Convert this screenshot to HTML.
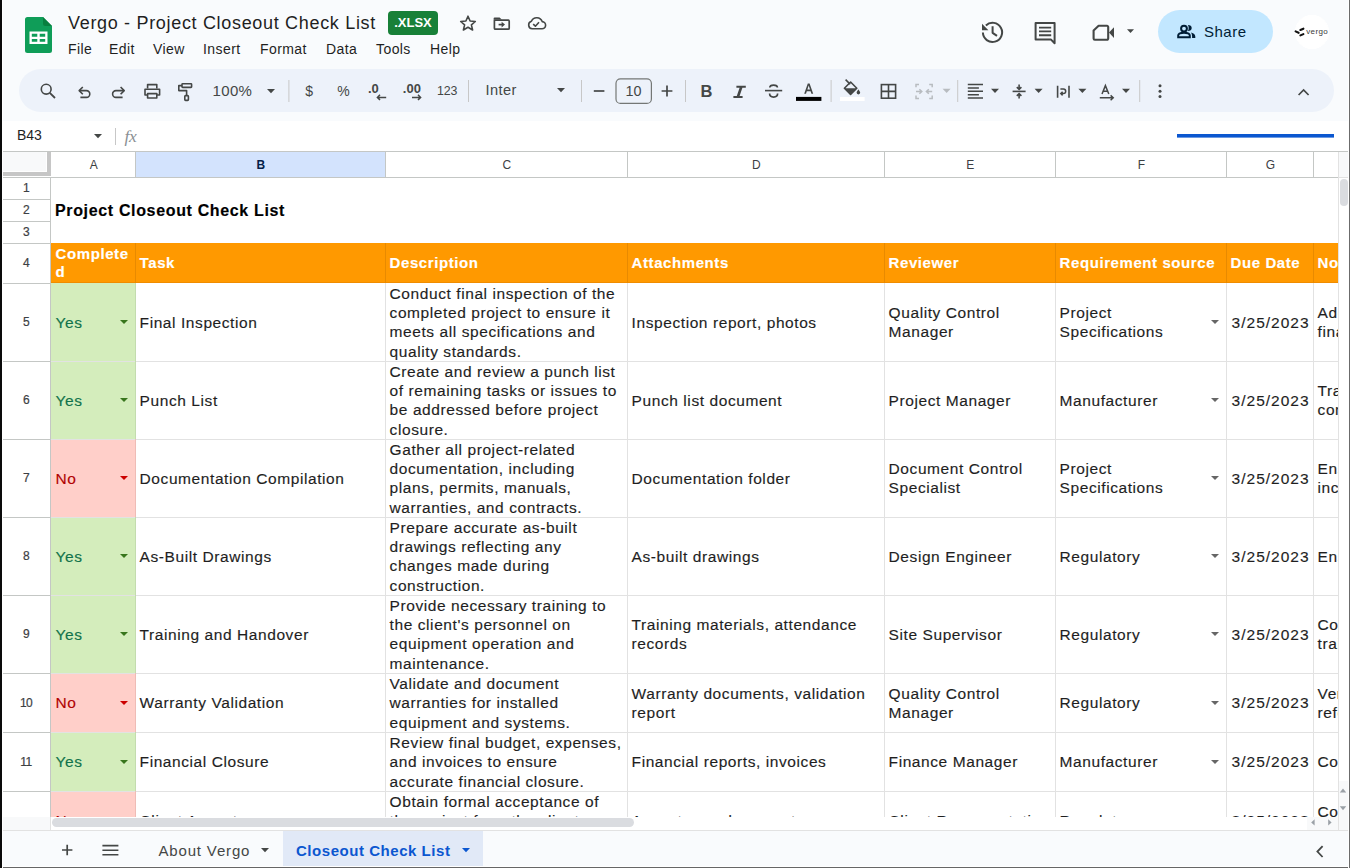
<!DOCTYPE html>
<html><head><meta charset="utf-8">
<style>
*{box-sizing:border-box;margin:0;padding:0}
html,body{width:1350px;height:868px;overflow:hidden;background:#f9fbfd;font-family:"Liberation Sans",sans-serif;position:relative}
.a{position:absolute}
svg{position:absolute;overflow:visible}
.t{white-space:nowrap;position:absolute}
#frame-l{left:0;top:0;width:3px;height:868px;background:#fff;border-left:2px solid #0a0a0a}
#frame-b{left:0;top:866px;width:1350px;height:2px;background:#fff;border-bottom:1px solid #666}
#frame-r{left:1348px;top:0;width:2px;height:868px;background:#fff;border-right:1px solid #6b6b6b}
.title{left:68px;top:12.5px;font-size:18px;letter-spacing:0.68px;color:#1f1f1f}
.menu{top:40.5px;font-size:14px;color:#1f1f1f;letter-spacing:0.42px}
.badge{left:388px;top:11px;width:50px;height:24px;background:#188038;border-radius:4px;color:#fff;font-size:13px;font-weight:bold;text-align:center;line-height:24px}
.share{left:1158px;top:10px;width:115px;height:43px;background:#c2e7ff;border-radius:22px}
.share .t{left:46px;top:13px;font-size:15px;color:#001d35;letter-spacing:0.5px}
.avatar{left:1295px;top:15px;width:34px;height:34px;border-radius:50%;background:#fff}
.tb{left:19px;top:69px;width:1315px;height:43px;background:#edf2fa;border-radius:22px}
.sep{position:absolute;width:1px;height:22px;background:#c7c7c7;top:80px}
.fbar{left:2px;top:121px;width:1346px;height:30px;background:#fff}
#g{left:2px;top:151px;width:1336px;height:666px;background:#fff;overflow:hidden}
#gi{position:absolute;left:-2px;top:-151px;width:1350px;height:868px}
#gi div{position:absolute}
.tx{white-space:nowrap;font-size:15.5px;letter-spacing:0.58px;color:#1f1f1f;line-height:19.4px;-webkit-text-stroke:0.15px currentColor}
.hd{font-weight:bold;color:#fff;letter-spacing:0.58px;font-size:15px;line-height:18.4px}
.gl{background:#e2e2e2}
.ch{font-size:12px;line-height:25px;text-align:center}
.rh{font-size:12px;line-height:16px;text-align:center;color:#3c4043;letter-spacing:-0.6px;-webkit-text-stroke:0.2px #3c4043}
.ar{width:0;height:0;border-left:4px solid transparent;border-right:4px solid transparent;border-top:4px solid #666}
</style></head>
<body>

<!-- ===== TOP BAR ===== -->
<svg style="left:25px;top:17px" width="27" height="36" viewBox="0 0 27 36">
 <path d="M2.5 0H18L27 9V33.5A2.5 2.5 0 0 1 24.5 36H2.5A2.5 2.5 0 0 1 0 33.5V2.5A2.5 2.5 0 0 1 2.5 0Z" fill="#0f9d58"/>
 <path d="M18 0L27 9H20.5A2.5 2.5 0 0 1 18 6.5Z" fill="#087f3f"/>
 <path d="M4.5 14.5H22.5V27H4.5Z" fill="#fff"/>
 <path d="M6.8 16.8H12.3V19.7H6.8ZM14.7 16.8H20.2V19.7H14.7ZM6.8 21.9H12.3V24.7H6.8ZM14.7 21.9H20.2V24.7H14.7Z" fill="#0f9d58"/>
</svg>
<div class="t title">Vergo - Project Closeout Check List</div>
<div class="a badge">.XLSX</div>

<div class="t menu" style="left:68px">File</div>
<div class="t menu" style="left:109px">Edit</div>
<div class="t menu" style="left:153px">View</div>
<div class="t menu" style="left:203px">Insert</div>
<div class="t menu" style="left:260px">Format</div>
<div class="t menu" style="left:326px">Data</div>
<div class="t menu" style="left:376px">Tools</div>
<div class="t menu" style="left:430px">Help</div>

<div class="a share"><div class="t">Share</div></div>
<div class="a avatar"></div>

<!-- ===== TOOLBAR ===== -->
<div class="a tb"></div>

<svg style="left:0;top:0" width="1350" height="868" viewBox="0 0 1350 868">
<g fill="none" stroke="#444746" stroke-width="1.7" stroke-linecap="butt" stroke-linejoin="round">
 <!-- star -->
 <path d="M468 16.2 L470.1 21 L475.3 21.5 L471.4 24.9 L472.6 30 L468 27.3 L463.4 30 L464.6 24.9 L460.7 21.5 L465.9 21 Z" stroke-width="1.6"/>
 <!-- folder move -->
 <path d="M494.4 20.2 V28.2 A1 1 0 0 0 495.4 29.2 H508.2 A1 1 0 0 0 509.2 28.2 V21.2 A1 1 0 0 0 508.2 20.2 Z" stroke-width="1.7"/>
 <path d="M493.6 19.6 V18.4 A1 1 0 0 1 494.6 17.4 H499.6 L501.8 19.6 Z" fill="#444746" stroke="none"/>
 <path d="M498.6 24.6 H502.6" stroke-width="1.7"/>
 <path d="M501.6 21.8 L505 24.6 L501.6 27.4 Z" fill="#444746" stroke="none"/>
 <!-- cloud done -->
 <path d="M532.2 28.8 H541.8 A3.6 3.6 0 0 0 542.2 21.6 A5.8 5.8 0 0 0 531.4 21.2 A3.9 3.9 0 0 0 532.2 28.8 Z" stroke-width="1.6"/>
 <path d="M533.2 24.2 L535.4 26.2 L539 22.2" stroke-width="1.6"/>
 <!-- history -->
 <path d="M982.9 32.6 A9.6 9.6 0 1 0 985.9 25.4" stroke-width="2"/>
 <path d="M992.6 26.2 V32.8 L997 35.8" stroke-width="2"/>
<!-- comment -->
 <path d="M1035.6 23 H1054.6 V43.2 L1050.8 39.4 H1035.6 Z" stroke-width="2"/>
 <path d="M1039 27.6 H1051.2 M1039 31.4 H1051.2 M1039 35.2 H1051.2" stroke-width="1.9"/>
 <!-- video -->
 <path d="M1093.6 30.4 L1098.6 25.8 H1107 A1.2 1.2 0 0 1 1108.2 27 V38.6 A1.2 1.2 0 0 1 1107 39.8 H1094.8 A1.2 1.2 0 0 1 1093.6 38.6 Z" stroke-width="2.1"/>
</g>
<g fill="#444746">
 <path d="M982 23.8 V30.2 H988.4 Z"/>
 <path d="M1109 32.6 L1114 27.2 V38 Z"/>
 <path d="M1127 29.3 H1134 L1130.5 33 Z"/>
</g>
<!-- share people icon -->
<g fill="none" stroke="#001d35" stroke-width="2">
 <circle cx="1184" cy="28.6" r="2.9"/>
 <path d="M1178.2 37.2 V35.6 C1178.2 33.8 1181 32.8 1184 32.8 C1187 32.8 1189.8 33.8 1189.8 35.6 V37.2 Z"/>
</g>
<g fill="#001d35">
 <path d="M1187.8 24.9 A3.9 3 0 0 1 1187.8 30.9 C1189 29.4 1189 26.4 1187.8 24.9 Z"/>
 <path d="M1191.1 32.4 C1193.8 33 1195.3 34.6 1195.3 36.4 V37.9 H1192.1 V36.4 C1192.1 35 1191.8 33.6 1191.1 32.4 Z"/>
</g>
<!-- avatar logo -->
<circle cx="1312" cy="32" r="17" fill="#fff"/>
<g stroke="#111" stroke-width="2.1" stroke-linecap="round" fill="none">
 <path d="M1295.6 31.4 L1298.6 32.8"/>
 <path d="M1300.4 30 L1303.4 28.7"/>
 <path d="M1300.4 35.4 L1303.4 34.1"/>
</g>
<text x="1306.2" y="34.4" font-family="Liberation Sans" font-size="8" fill="#3a3a3a" letter-spacing="0.4">vergo</text>
<!-- ===== toolbar ===== -->
<g fill="none" stroke="#444746" stroke-width="1.6" stroke-linejoin="round">
 <!-- search -->
 <circle cx="46.2" cy="89.2" r="4.9"/>
 <path d="M49.8 92.8 L55 98" stroke-width="1.8"/>
 <!-- undo -->
 <path d="M79.8 90.6 H86.4 A3.4 3.4 0 0 1 86.4 97.4 H80.4"/>
 <path d="M82.8 87 L79.2 90.6 L82.8 94.2"/>
 <!-- redo -->
 <path d="M123.8 90.6 H116 A3.4 3.4 0 0 0 116 97.4 H122.6"/>
 <path d="M120.6 87 L124.2 90.6 L120.6 94.2"/>
 <!-- print -->
 <path d="M147.6 88.4 V84.6 H156.8 V88.4"/>
 <path d="M147.6 95 H145 V89.2 H159.6 V95 H157"/>
 <path d="M147.6 93.6 H156.8 V98 H147.6 Z"/>
 <!-- paint format -->
 <rect x="182" y="83.8" width="9.6" height="3.6" rx="0.6"/>
 <path d="M182 85.6 H178.8 V90.6 H186.6 V95.4"/>
 <rect x="184.8" y="95.6" width="3.6" height="4.8" rx="0.8"/>
</g>
<g fill="#444746">
 <path d="M267 89 H275 L271 93.2 Z"/>
 <path d="M557 88 H565 L561 92.2 Z"/>
 <path d="M991 88.8 H999 L995 93 Z"/>
 <path d="M1034.6 88.8 H1042.6 L1038.6 93 Z"/>
 <path d="M1078.4 88.8 H1086.4 L1082.4 93 Z"/>
 <path d="M1122 88.8 H1130 L1126 93 Z"/>
 <path d="M942.6 88.8 H950.6 L946.6 93 Z" fill="#b8bcc0"/>
 <path d="M1127 29.3 H1134 L1130.5 33 Z" fill="none"/>
</g>
<g fill="#c7c7c7">
 <rect x="288.4" y="80" width="1" height="22"/>
 <rect x="468" y="80" width="1" height="22"/>
 <rect x="581" y="80" width="1" height="22"/>
 <rect x="685" y="80" width="1" height="22"/>
 <rect x="830.6" y="80" width="1" height="22"/>
 <rect x="957.2" y="80" width="1" height="22"/>
 <rect x="1139.2" y="80" width="1" height="22"/>
</g>
<g font-family="Liberation Sans" fill="#444746">
 <text x="212.6" y="96" font-size="15" letter-spacing="0.3">100%</text>
 <text x="305.2" y="96" font-size="14">$</text>
 <text x="337.2" y="96" font-size="14">%</text>
 <text x="368" y="93" font-size="13" font-weight="bold">.0</text>
 <text x="402.8" y="93" font-size="13" font-weight="bold">.00</text>
 <text x="437" y="94.6" font-size="12.4" letter-spacing="-0.2">123</text>
 <text x="485.6" y="95.4" font-size="14.6" letter-spacing="0.4">Inter</text>
 <text x="633.6" y="95.8" font-size="14.4" text-anchor="middle">10</text>
</g>
<g fill="none" stroke="#444746" stroke-width="1.5">
 <path d="M377.2 97.4 H386.2 M380 94.8 L377.4 97.4 L380 100"/>
 <path d="M412 97.4 H420.6 M418 94.8 L420.6 97.4 L418 100"/>
 <rect x="616" y="78.8" width="35.4" height="24.6" rx="4.5" stroke="#747775" stroke-width="1.2"/>
 <path d="M593.8 91 H604.4" stroke-width="1.7"/>
 <path d="M661.6 91 H672.4 M667 85.6 V96.4" stroke-width="1.7"/>
 <!-- strike -->
 <path d="M765 90.6 H782.2" stroke-width="1.6"/>
 <path d="M777.4 87.6 C777.4 84.2 769.8 84.2 769.8 87.6" stroke-width="1.7"/>
 <path d="M769.6 93.6 C769.6 98.2 777.6 98.2 777.6 93.6" stroke-width="1.7"/>
 <!-- borders -->
 <rect x="881.4" y="84.6" width="14.2" height="13.6" stroke-width="1.6"/>
 <path d="M888.5 84.6 V98.2 M881.4 91.4 H895.6" stroke-width="1.6"/>
 <!-- merge -->
 <g stroke="#b8bcc0" stroke-width="1.5">
  <path d="M916 87.2 V84.6 H919 M916 95.6 V98.4 H919 M932.2 87.2 V84.6 H929.2 M932.2 95.6 V98.4 H929.2"/>
  <path d="M916 91.5 H921.6 M919.4 89.2 L921.8 91.5 L919.4 93.8 M932.2 91.5 H926.6 M928.8 89.2 L926.4 91.5 L928.8 93.8"/>
 </g>
 <!-- align left -->
 <path d="M967.8 84.6 H983 M967.8 88 H978.9 M967.8 91.3 H983 M967.8 94.8 H978.9 M967.8 98 H983" stroke-width="1.5"/>
 <!-- vertical align -->
 <path d="M1012.6 91.4 H1025.6" stroke-width="1.6"/>
 <path d="M1019.1 84.6 V89.4 M1016.8 87.2 L1019.1 89.4 L1021.4 87.2 M1019.1 98.6 V93.6 M1016.8 95.8 L1019.1 93.6 L1021.4 95.8" stroke-width="1.6"/>
 <!-- wrap -->
 <path d="M1057.6 85.8 V97.8 M1069 85.8 V97.8" stroke-width="1.6"/>
 <path d="M1060.4 89 H1063.4 A2.3 2.3 0 0 1 1063.4 93.6 H1061 M1062.6 91.8 L1060.8 93.6 L1062.6 95.4" stroke-width="1.5"/>
 <!-- text rotation -->
 <path d="M1099.8 97.8 H1113 M1110.6 95.4 L1113.2 97.8 L1110.6 100.2" stroke-width="1.5"/>
 <path d="M1102 94 L1105.4 85.6 L1108.8 94 M1103.2 91.2 H1107.6" stroke-width="1.5"/>
 <!-- caret up -->
 <path d="M1298.6 95 L1303.6 90 L1308.6 95" stroke-width="1.7"/>
</g>
<g fill="#444746">
 <!-- bold B -->
 <text x="700.6" y="97.2" font-family="Liberation Sans" font-size="16.5" font-weight="bold">B</text>
 <!-- italic I -->
 <path d="M736.4 85.8 H745.8 V87.8 H742.4 L739.6 96 H742.6 V98 H733.4 V96 H736.8 L739.6 87.8 H736.4 Z"/>
 <!-- text color A -->
 <path d="M804.2 93.8 L807.8 83.4 H809.6 L813.2 93.8 H811.4 L810.6 91.2 H806.8 L806 93.8 Z M807.4 89.6 H810 L808.7 85.6 Z"/>
 <rect x="796" y="96.9" width="25.4" height="4" fill="#000"/>
 <!-- fill bucket -->
 <path d="M844.4 88.2 L850.6 82 L856.8 88.2 L850.6 94.4 Z" fill="none" stroke="#444746" stroke-width="1.6" stroke-linejoin="round"/>
 <path d="M844.4 88.2 H856.8 L850.6 94.4 Z"/>
 <path d="M845.6 79.6 L850.2 84.2" stroke="#444746" stroke-width="1.6"/>
 <path d="M858.4 89.4 C858.4 89.4 860.2 91.6 860.2 92.6 A1.8 1.8 0 0 1 856.6 92.6 C856.6 91.6 858.4 89.4 858.4 89.4 Z"/>
 <rect x="840" y="97" width="24.6" height="4" fill="#fff"/>
 <!-- more vert -->
 <circle cx="1160" cy="85.8" r="1.5"/><circle cx="1160" cy="91.2" r="1.5"/><circle cx="1160" cy="96.6" r="1.5"/>
</g>
</svg>

<!-- ===== FORMULA BAR ===== -->
<div class="a fbar"></div>
<div class="t" style="left:17px;top:127.4px;font-size:14px;color:#1f1f1f;letter-spacing:-0.1px">B43</div>
<svg style="left:0;top:0" width="1350" height="160">
 <path d="M94 134 H102 L98 138.2 Z" fill="#444746"/>
 <rect x="115" y="128" width="1" height="17" fill="#c7c7c7"/>
 <text x="124.6" y="142" font-family="Liberation Serif" font-style="italic" font-size="17.5" fill="#8a8f94" letter-spacing="-0.5">fx</text>
 <rect x="1177" y="134" width="157" height="3.6" fill="#0b57d0"/>
</svg>

<!-- ===== GRID ===== -->
<div id="g" class="a"><div id="gi">
<div class="bg" style="left:51px;top:243px;width:1287px;height:40px;background:#ff9900"></div>
<div class="bg" style="left:51px;top:283px;width:84px;height:78px;background:#d4edbc"></div>
<div class="bg" style="left:51px;top:361px;width:84px;height:78px;background:#d4edbc"></div>
<div class="bg" style="left:51px;top:439px;width:84px;height:78px;background:#ffcfc9"></div>
<div class="bg" style="left:51px;top:517px;width:84px;height:78px;background:#d4edbc"></div>
<div class="bg" style="left:51px;top:595px;width:84px;height:78px;background:#d4edbc"></div>
<div class="bg" style="left:51px;top:673px;width:84px;height:59px;background:#ffcfc9"></div>
<div class="bg" style="left:51px;top:732px;width:84px;height:59px;background:#d4edbc"></div>
<div class="bg" style="left:51px;top:791px;width:84px;height:59px;background:#ffcfc9"></div>
<div class="gl" style="left:51px;top:361px;width:1287px;height:1px"></div>
<div class="gl" style="left:51px;top:439px;width:1287px;height:1px"></div>
<div class="gl" style="left:51px;top:517px;width:1287px;height:1px"></div>
<div class="gl" style="left:51px;top:595px;width:1287px;height:1px"></div>
<div class="gl" style="left:51px;top:673px;width:1287px;height:1px"></div>
<div class="gl" style="left:51px;top:732px;width:1287px;height:1px"></div>
<div class="gl" style="left:51px;top:791px;width:1287px;height:1px"></div>
<div class="bg" style="left:51px;top:282px;width:1287px;height:1px;background:#f08c00"></div>
<div class="gl" style="left:135px;top:283px;width:1px;height:540px"></div>
<div class="gl" style="left:385px;top:283px;width:1px;height:540px"></div>
<div class="gl" style="left:627px;top:283px;width:1px;height:540px"></div>
<div class="gl" style="left:884px;top:283px;width:1px;height:540px"></div>
<div class="gl" style="left:1055px;top:283px;width:1px;height:540px"></div>
<div class="gl" style="left:1226px;top:283px;width:1px;height:540px"></div>
<div class="gl" style="left:1313px;top:283px;width:1px;height:540px"></div>
<div class="bg" style="left:135px;top:243px;width:1px;height:40px;background:#e88a00"></div>
<div class="bg" style="left:385px;top:243px;width:1px;height:40px;background:#e88a00"></div>
<div class="bg" style="left:627px;top:243px;width:1px;height:40px;background:#e88a00"></div>
<div class="bg" style="left:884px;top:243px;width:1px;height:40px;background:#e88a00"></div>
<div class="bg" style="left:1055px;top:243px;width:1px;height:40px;background:#e88a00"></div>
<div class="bg" style="left:1226px;top:243px;width:1px;height:40px;background:#e88a00"></div>
<div class="bg" style="left:1313px;top:243px;width:1px;height:40px;background:#e88a00"></div>
<div class="bg" style="left:135px;top:283px;width:1px;height:78px;background:#c3dcae"></div>
<div class="bg" style="left:135px;top:361px;width:1px;height:78px;background:#c3dcae"></div>
<div class="bg" style="left:135px;top:439px;width:1px;height:78px;background:#efbcb6"></div>
<div class="bg" style="left:135px;top:517px;width:1px;height:78px;background:#c3dcae"></div>
<div class="bg" style="left:135px;top:595px;width:1px;height:78px;background:#c3dcae"></div>
<div class="bg" style="left:135px;top:673px;width:1px;height:59px;background:#efbcb6"></div>
<div class="bg" style="left:135px;top:732px;width:1px;height:59px;background:#c3dcae"></div>
<div class="bg" style="left:135px;top:791px;width:1px;height:59px;background:#efbcb6"></div>
<div class="tx" style="left:55px;top:201px;font-size:16px;font-weight:bold;letter-spacing:0.65px;color:#000">Project Closeout Check List</div>
<div class="tx hd" style="left:55.6px;top:244.6px">Complete</div>
<div class="tx hd" style="left:55.6px;top:263.0px">d</div>
<div class="tx hd" style="left:139.6px;top:253.8px">Task</div>
<div class="tx hd" style="left:389.6px;top:253.8px">Description</div>
<div class="tx hd" style="left:631.6px;top:253.8px">Attachments</div>
<div class="tx hd" style="left:888.6px;top:253.8px">Reviewer</div>
<div class="tx hd" style="left:1059.6px;top:253.8px">Requirement source</div>
<div class="tx hd" style="left:1230.6px;top:253.8px">Due Date</div>
<div class="tx hd" style="left:1317.6px;top:253.8px">Notes</div>
<div class="tx" style="left:55.6px;top:312.7px;color:#11734b">Yes</div>
<div class="ar" style="left:120px;top:320.0px;border-top-color:#38761d"></div>
<div class="tx" style="left:139.6px;top:312.7px">Final Inspection</div>
<div class="tx" style="left:389.6px;top:283.6px">Conduct final inspection of the</div>
<div class="tx" style="left:389.6px;top:303.0px">completed project to ensure it</div>
<div class="tx" style="left:389.6px;top:322.4px">meets all specifications and</div>
<div class="tx" style="left:389.6px;top:341.8px">quality standards.</div>
<div class="tx" style="left:631.6px;top:312.7px">Inspection report, photos</div>
<div class="tx" style="left:888.6px;top:303.0px">Quality Control</div>
<div class="tx" style="left:888.6px;top:322.4px">Manager</div>
<div class="tx" style="left:1059.6px;top:303.0px">Project</div>
<div class="tx" style="left:1059.6px;top:322.4px">Specifications</div>
<div class="ar" style="left:1211px;top:320.0px;border-top-color:#666"></div>
<div class="tx" style="left:1231.6px;top:312.7px;letter-spacing:1.0px">3/25/2023</div>
<div class="tx" style="left:1317.6px;top:303.0px">Add</div>
<div class="tx" style="left:1317.6px;top:322.4px">fina</div>
<div class="tx" style="left:55.6px;top:390.7px;color:#11734b">Yes</div>
<div class="ar" style="left:120px;top:398.0px;border-top-color:#38761d"></div>
<div class="tx" style="left:139.6px;top:390.7px">Punch List</div>
<div class="tx" style="left:389.6px;top:361.6px">Create and review a punch list</div>
<div class="tx" style="left:389.6px;top:381.0px">of remaining tasks or issues to</div>
<div class="tx" style="left:389.6px;top:400.4px">be addressed before project</div>
<div class="tx" style="left:389.6px;top:419.8px">closure.</div>
<div class="tx" style="left:631.6px;top:390.7px">Punch list document</div>
<div class="tx" style="left:888.6px;top:390.7px">Project Manager</div>
<div class="tx" style="left:1059.6px;top:390.7px">Manufacturer</div>
<div class="ar" style="left:1211px;top:398.0px;border-top-color:#666"></div>
<div class="tx" style="left:1231.6px;top:390.7px;letter-spacing:1.0px">3/25/2023</div>
<div class="tx" style="left:1317.6px;top:381.0px">Trac</div>
<div class="tx" style="left:1317.6px;top:400.4px">com</div>
<div class="tx" style="left:55.6px;top:468.7px;color:#b10202">No</div>
<div class="ar" style="left:120px;top:476.0px;border-top-color:#cc0000"></div>
<div class="tx" style="left:139.6px;top:468.7px">Documentation Compilation</div>
<div class="tx" style="left:389.6px;top:439.6px">Gather all project-related</div>
<div class="tx" style="left:389.6px;top:459.0px">documentation, including</div>
<div class="tx" style="left:389.6px;top:478.4px">plans, permits, manuals,</div>
<div class="tx" style="left:389.6px;top:497.8px">warranties, and contracts.</div>
<div class="tx" style="left:631.6px;top:468.7px">Documentation folder</div>
<div class="tx" style="left:888.6px;top:459.0px">Document Control</div>
<div class="tx" style="left:888.6px;top:478.4px">Specialist</div>
<div class="tx" style="left:1059.6px;top:459.0px">Project</div>
<div class="tx" style="left:1059.6px;top:478.4px">Specifications</div>
<div class="ar" style="left:1211px;top:476.0px;border-top-color:#666"></div>
<div class="tx" style="left:1231.6px;top:468.7px;letter-spacing:1.0px">3/25/2023</div>
<div class="tx" style="left:1317.6px;top:459.0px">Ensu</div>
<div class="tx" style="left:1317.6px;top:478.4px">inclu</div>
<div class="tx" style="left:55.6px;top:546.7px;color:#11734b">Yes</div>
<div class="ar" style="left:120px;top:554.0px;border-top-color:#38761d"></div>
<div class="tx" style="left:139.6px;top:546.7px">As-Built Drawings</div>
<div class="tx" style="left:389.6px;top:517.6px">Prepare accurate as-built</div>
<div class="tx" style="left:389.6px;top:537.0px">drawings reflecting any</div>
<div class="tx" style="left:389.6px;top:556.4px">changes made during</div>
<div class="tx" style="left:389.6px;top:575.8px">construction.</div>
<div class="tx" style="left:631.6px;top:546.7px">As-built drawings</div>
<div class="tx" style="left:888.6px;top:546.7px">Design Engineer</div>
<div class="tx" style="left:1059.6px;top:546.7px">Regulatory</div>
<div class="ar" style="left:1211px;top:554.0px;border-top-color:#666"></div>
<div class="tx" style="left:1231.6px;top:546.7px;letter-spacing:1.0px">3/25/2023</div>
<div class="tx" style="left:1317.6px;top:546.7px">Ensu</div>
<div class="tx" style="left:55.6px;top:624.7px;color:#11734b">Yes</div>
<div class="ar" style="left:120px;top:632.0px;border-top-color:#38761d"></div>
<div class="tx" style="left:139.6px;top:624.7px">Training and Handover</div>
<div class="tx" style="left:389.6px;top:595.6px">Provide necessary training to</div>
<div class="tx" style="left:389.6px;top:615.0px">the client's personnel on</div>
<div class="tx" style="left:389.6px;top:634.4px">equipment operation and</div>
<div class="tx" style="left:389.6px;top:653.8px">maintenance.</div>
<div class="tx" style="left:631.6px;top:615.0px">Training materials, attendance</div>
<div class="tx" style="left:631.6px;top:634.4px">records</div>
<div class="tx" style="left:888.6px;top:624.7px">Site Supervisor</div>
<div class="tx" style="left:1059.6px;top:624.7px">Regulatory</div>
<div class="ar" style="left:1211px;top:632.0px;border-top-color:#666"></div>
<div class="tx" style="left:1231.6px;top:624.7px;letter-spacing:1.0px">3/25/2023</div>
<div class="tx" style="left:1317.6px;top:615.0px">Con</div>
<div class="tx" style="left:1317.6px;top:634.4px">trai</div>
<div class="tx" style="left:55.6px;top:693.2px;color:#b10202">No</div>
<div class="ar" style="left:120px;top:700.5px;border-top-color:#cc0000"></div>
<div class="tx" style="left:139.6px;top:693.2px">Warranty Validation</div>
<div class="tx" style="left:389.6px;top:673.8px">Validate and document</div>
<div class="tx" style="left:389.6px;top:693.2px">warranties for installed</div>
<div class="tx" style="left:389.6px;top:712.6px">equipment and systems.</div>
<div class="tx" style="left:631.6px;top:683.5px">Warranty documents, validation</div>
<div class="tx" style="left:631.6px;top:702.9px">report</div>
<div class="tx" style="left:888.6px;top:683.5px">Quality Control</div>
<div class="tx" style="left:888.6px;top:702.9px">Manager</div>
<div class="tx" style="left:1059.6px;top:693.2px">Regulatory</div>
<div class="ar" style="left:1211px;top:700.5px;border-top-color:#666"></div>
<div class="tx" style="left:1231.6px;top:693.2px;letter-spacing:1.0px">3/25/2023</div>
<div class="tx" style="left:1317.6px;top:683.5px">Veri</div>
<div class="tx" style="left:1317.6px;top:702.9px">refe</div>
<div class="tx" style="left:55.6px;top:752.2px;color:#11734b">Yes</div>
<div class="ar" style="left:120px;top:759.5px;border-top-color:#38761d"></div>
<div class="tx" style="left:139.6px;top:752.2px">Financial Closure</div>
<div class="tx" style="left:389.6px;top:732.8px">Review final budget, expenses,</div>
<div class="tx" style="left:389.6px;top:752.2px">and invoices to ensure</div>
<div class="tx" style="left:389.6px;top:771.6px">accurate financial closure.</div>
<div class="tx" style="left:631.6px;top:752.2px">Financial reports, invoices</div>
<div class="tx" style="left:888.6px;top:752.2px">Finance Manager</div>
<div class="tx" style="left:1059.6px;top:752.2px">Manufacturer</div>
<div class="ar" style="left:1211px;top:759.5px;border-top-color:#666"></div>
<div class="tx" style="left:1231.6px;top:752.2px;letter-spacing:1.0px">3/25/2023</div>
<div class="tx" style="left:1317.6px;top:752.2px">Con</div>
<div class="tx" style="left:55.6px;top:811.2px;color:#b10202">No</div>
<div class="ar" style="left:120px;top:818.5px;border-top-color:#cc0000"></div>
<div class="tx" style="left:139.6px;top:811.2px">Client Acceptance</div>
<div class="tx" style="left:389.6px;top:791.8px">Obtain formal acceptance of</div>
<div class="tx" style="left:389.6px;top:811.2px">the project from the client</div>
<div class="tx" style="left:389.6px;top:830.6px">upon completion.</div>
<div class="tx" style="left:631.6px;top:811.2px">Acceptance document</div>
<div class="tx" style="left:888.6px;top:811.2px">Client Representative</div>
<div class="tx" style="left:1059.6px;top:811.2px">Regulatory</div>
<div class="ar" style="left:1211px;top:818.5px;border-top-color:#666"></div>
<div class="tx" style="left:1231.6px;top:811.2px;letter-spacing:1.0px">3/25/2023</div>
<div class="tx" style="left:1317.6px;top:801.5px">Con</div>
<div class="tx" style="left:1317.6px;top:820.9px">sign</div>
<div class="bg" style="left:2px;top:151px;width:1346px;height:1px;background:#c4c7c5"></div>
<div class="bg" style="left:3px;top:152px;width:43px;height:19px;background:#f8f9fa"></div>
<div class="bg" style="left:2px;top:172px;width:49px;height:4px;background:#c6c6c6"></div>
<div class="bg" style="left:47px;top:152px;width:4px;height:24px;background:#c6c6c6"></div>
<div class="bg" style="left:51px;top:152px;width:1287px;height:25px;background:#fff"></div>
<div class="bg" style="left:135px;top:152px;width:250px;height:25px;background:#d3e3fd"></div>
<div class="bg" style="left:2px;top:177px;width:1336px;height:1px;background:#c4c7c5"></div>
<div class="ch" style="left:51.8px;top:153px;width:84px;color:#3c4043">A</div>
<div class="bg" style="left:135px;top:152px;width:1px;height:25px;background:#c4c7c5"></div>
<div class="ch" style="left:135.8px;top:153px;width:250px;color:#041e49;font-weight:bold">B</div>
<div class="bg" style="left:385px;top:152px;width:1px;height:25px;background:#c4c7c5"></div>
<div class="ch" style="left:385.8px;top:153px;width:242px;color:#3c4043">C</div>
<div class="bg" style="left:627px;top:152px;width:1px;height:25px;background:#c4c7c5"></div>
<div class="ch" style="left:627.8px;top:153px;width:257px;color:#3c4043">D</div>
<div class="bg" style="left:884px;top:152px;width:1px;height:25px;background:#c4c7c5"></div>
<div class="ch" style="left:884.8px;top:153px;width:171px;color:#3c4043">E</div>
<div class="bg" style="left:1055px;top:152px;width:1px;height:25px;background:#c4c7c5"></div>
<div class="ch" style="left:1055.8px;top:153px;width:171px;color:#3c4043">F</div>
<div class="bg" style="left:1226px;top:152px;width:1px;height:25px;background:#c4c7c5"></div>
<div class="ch" style="left:1226.8px;top:153px;width:87px;color:#3c4043">G</div>
<div class="bg" style="left:1313px;top:152px;width:1px;height:25px;background:#c4c7c5"></div>
<div class="ch" style="left:1313.8px;top:153px;width:187px;color:#3c4043">H</div>
<div class="bg" style="left:2px;top:178px;width:48px;height:640px;background:#fff"></div>
<div class="bg" style="left:50px;top:178px;width:1px;height:640px;background:#c4c7c5"></div>
<div class="bg" style="left:2px;top:199px;width:48px;height:1px;background:#c4c7c5"></div>
<div class="rh" style="left:2px;top:180.0px;width:48px">1</div>
<div class="bg" style="left:2px;top:221px;width:48px;height:1px;background:#c4c7c5"></div>
<div class="rh" style="left:2px;top:202.0px;width:48px">2</div>
<div class="bg" style="left:2px;top:243px;width:48px;height:1px;background:#c4c7c5"></div>
<div class="rh" style="left:2px;top:224.0px;width:48px">3</div>
<div class="bg" style="left:2px;top:283px;width:48px;height:1px;background:#c4c7c5"></div>
<div class="rh" style="left:2px;top:255.0px;width:48px">4</div>
<div class="bg" style="left:2px;top:361px;width:48px;height:1px;background:#c4c7c5"></div>
<div class="rh" style="left:2px;top:314.0px;width:48px">5</div>
<div class="bg" style="left:2px;top:439px;width:48px;height:1px;background:#c4c7c5"></div>
<div class="rh" style="left:2px;top:392.0px;width:48px">6</div>
<div class="bg" style="left:2px;top:517px;width:48px;height:1px;background:#c4c7c5"></div>
<div class="rh" style="left:2px;top:470.0px;width:48px">7</div>
<div class="bg" style="left:2px;top:595px;width:48px;height:1px;background:#c4c7c5"></div>
<div class="rh" style="left:2px;top:548.0px;width:48px">8</div>
<div class="bg" style="left:2px;top:673px;width:48px;height:1px;background:#c4c7c5"></div>
<div class="rh" style="left:2px;top:626.0px;width:48px">9</div>
<div class="bg" style="left:2px;top:732px;width:48px;height:1px;background:#c4c7c5"></div>
<div class="rh" style="left:2px;top:694.5px;width:48px">10</div>
<div class="bg" style="left:2px;top:791px;width:48px;height:1px;background:#c4c7c5"></div>
<div class="rh" style="left:2px;top:753.5px;width:48px">11</div>
<div class="bg" style="left:2px;top:850px;width:48px;height:1px;background:#c4c7c5"></div>

</div></div>

<!-- ===== BOTTOM ===== -->
<div class="a" style="left:2px;top:817px;width:1336px;height:13px;background:#fff"></div>
<div class="a" style="left:2px;top:817px;width:48px;height:13px;background:#f8f9fa"></div>
<div class="a" style="left:50px;top:817px;width:1px;height:13px;background:#e2e2e2"></div>
<div class="a" style="left:52px;top:817.6px;width:582px;height:9.4px;background:#dadce0;border-radius:5px"></div>
<div class="a" style="left:1307px;top:817px;width:31px;height:13px;background:#f8f9fa"></div>
<div class="a" style="left:1338px;top:151px;width:10px;height:679px;background:#fff;border-left:1px solid #e2e2e2"></div>
<div class="a" style="left:1338px;top:151px;width:10px;height:27px;background:#f8f9fa;border-left:1px solid #e2e2e2"></div>
<div class="a" style="left:1338px;top:151px;width:10px;height:1px;background:#c4c7c5"></div>
<div class="a" style="left:1338px;top:177px;width:10px;height:1px;background:#e2e2e2"></div>
<div class="a" style="left:1339.8px;top:179px;width:8px;height:27px;background:#dadce0;border-radius:4px"></div>
<div class="a" style="left:1338px;top:781px;width:10px;height:49px;background:#f8f9fa;border-left:1px solid #e2e2e2"></div>
<div class="a" style="left:2px;top:830px;width:1346px;height:36px;background:#f9fbfd;border-top:1px solid #e2e2e2"></div>
<div class="a" style="left:283px;top:831px;width:200px;height:35px;background:#e1e9f7"></div>
<svg style="left:0;top:0" width="1350" height="868">
 <g fill="#9aa0a6">
  <path d="M1343 788.4 L1346.2 792.4 H1339.8 Z"/>
  <path d="M1343 810.2 L1346.2 806.2 H1339.8 Z"/>
  <path d="M1311.2 822.4 L1314.6 819.2 V825.6 Z"/>
  <path d="M1331.6 822.4 L1328.2 819.2 V825.6 Z"/>
 </g>
 <g fill="none" stroke="#444746" stroke-width="1.7">
  <path d="M62 850 H72.4 M67.2 844.8 V855.2"/>
  <path d="M102.4 845.6 H118.4 M102.4 850.2 H118.4 M102.4 854.8 H118.4" stroke-width="1.6"/>
  <path d="M1322.6 846.2 L1317.4 851.6 L1322.6 857" stroke-width="1.8"/>
 </g>
 <path d="M261 848 H269 L265 852.2 Z" fill="#444746"/>
 <path d="M462 848 H470 L466 852.2 Z" fill="#0b57d0"/>
 <text x="158.4" y="855.6" font-family="Liberation Sans" font-size="15" fill="#444746" letter-spacing="0.85">About Vergo</text>
 <text x="296" y="855.6" font-family="Liberation Sans" font-size="15" font-weight="bold" fill="#0b57d0" letter-spacing="0.54">Closeout Check List</text>
</svg>
<div id="frame-b" class="a"></div>
<div id="frame-l" class="a"></div>
<div id="frame-r" class="a"></div>
</body></html>
